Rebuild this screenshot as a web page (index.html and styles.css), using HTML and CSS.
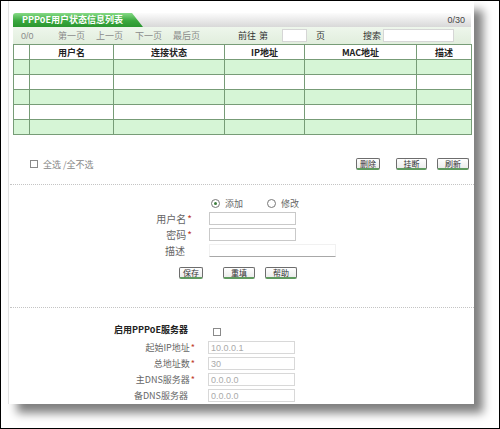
FILE: index.html
```html
<!DOCTYPE html>
<html lang="zh-CN">
<head>
<meta charset="utf-8">
<title>PPPoE用户状态信息列表</title>
<link rel="stylesheet" href="styles.css">
</head>
<body>
<div class="frame">
  <div class="paper">
    <div class="list">
      <div class="titlebar">
        <div class="tab">PPPoE用户状态信息列表</div>
        <div class="count">0/30</div>
      </div>
      <div class="navbar">
        <span class="nv w-pg">0/0</span>
        <span class="nv w-l1">第一页</span>
        <span class="nv w-l2">上一页</span>
        <span class="nv w-l3">下一页</span>
        <span class="nv w-l4">最后页</span>
        <span class="nd w-go">前往</span>
        <span class="nd w-di">第</span>
        <input class="navin w-pgin" type="text">
        <span class="nd w-ye">页</span>
        <span class="nd w-ss">搜索</span>
        <input class="navin w-ssin" type="text">
      </div>
      <table class="grid">
        <colgroup>
          <col class="c1"><col class="c2"><col class="c3"><col class="c4"><col class="c5"><col class="c6">
        </colgroup>
        <tr class="head"><th></th><th>用户名</th><th>连接状态</th><th>IP地址</th><th>MAC地址</th><th>描述</th></tr>
        <tr class="g"><td></td><td></td><td></td><td></td><td></td><td></td></tr>
        <tr class="w"><td></td><td></td><td></td><td></td><td></td><td></td></tr>
        <tr class="g"><td></td><td></td><td></td><td></td><td></td><td></td></tr>
        <tr class="w"><td></td><td></td><td></td><td></td><td></td><td></td></tr>
        <tr class="g"><td></td><td></td><td></td><td></td><td></td><td></td></tr>
      </table>
      <div class="actions">
        <span class="cb"></span>
        <span class="sel">全选 /全不选</span>
        <span class="btn b-first">删除</span>
        <span class="btn b-second">挂断</span>
        <span class="btn b-third">刷新</span>
      </div>
    </div>
    <div class="sep sep1"></div>
    <div class="form form1">
      <div></div>
      <div class="radios">
        <span class="radio on"></span><span class="rtext">添加</span>
        <span class="radio"></span><span class="rtext">修改</span>
      </div>
      <label class="lbl lbl1">用户名<span class="star">*</span></label>
      <input class="inp" type="text">
      <label class="lbl lbl1">密码<span class="star">*</span></label>
      <input class="inp" type="password">
      <label class="lbl lbl1 nostar">描述</label>
      <input class="inp desc" type="text">
    </div>
    <div class="btnrow">
      <span class="btn b-first">保存</span>
      <span class="btn b-second2">重填</span>
      <span class="btn b-third">帮助</span>
    </div>
    <div class="sep sep2"></div>
    <div class="form form2">
      <label class="lbl strong">启用PPPoE服务器</label>
      <div><span class="cb cb2"></span></div>
      <label class="lbl">起始IP地址<span class="star">*</span></label>
      <input class="inp ro" type="text" value="10.0.0.1">
      <label class="lbl">总地址数<span class="star">*</span></label>
      <input class="inp ro" type="text" value="30">
      <label class="lbl">主DNS服务器<span class="star">*</span></label>
      <input class="inp ro" type="text" value="0.0.0.0">
      <label class="lbl nostar">备DNS服务器</label>
      <input class="inp ro" type="text" value="0.0.0.0">
    </div>
  </div>
</div>
</body>
</html>
```

FILE: styles.css
```css
* { box-sizing: border-box; }
html, body { margin: 0; padding: 0; background: #fff; }
body {
  font-family: "Noto Sans CJK SC", "Liberation Sans", sans-serif;
  font-size: 9px;
  color: #555;
}
.frame {
  width: 500px;
  height: 429px;
  border: 1px solid #000;
  overflow: hidden;
  padding-left: 7px;
  background: #fff;
}
.paper {
  width: 466px;
  height: 403px;
  background: #fff;
  border-left: 1px solid #e2e2e2;
  box-shadow: 9px 9px 9px rgba(0, 0, 0, 0.5);
  padding-top: 12px;
}
.list { margin: 0 3px 0 4px; }

.titlebar {
  display: flex;
  height: 14px;
  background: linear-gradient(#fcfcfc, #d8d8d8);
}
.tab {
  width: 130px;
  background: linear-gradient(#86da86, #3aa83e 55%, #2a9630);
  color: #fff;
  font-weight: bold;
  padding-left: 9px;
  line-height: 14px;
  white-space: nowrap;
  border-top-left-radius: 3px;
  clip-path: polygon(0 0, 119px 0, 130px 100%, 0 100%);
}
.count {
  margin-left: auto;
  padding-right: 6px;
  line-height: 14px;
  color: #444;
  font-family: "Liberation Sans", sans-serif;
}

.navbar {
  display: flex;
  align-items: center;
  height: 17px;
  padding-left: 8px;
  background: linear-gradient(#eef6ec, #e1eedd);
  white-space: nowrap;
}
.nv { color: #8a8a8a; }
.nd { color: #333; }
.w-pg { width: 37px; font-family: "Liberation Sans", sans-serif; }
.w-l1 { width: 38px; }
.w-l2 { width: 39px; }
.w-l3 { width: 38px; }
.w-l4 { width: 65px; }
.w-go { width: 20px; }
.w-di { width: 24px; padding-left: 1px; }
.w-ye { width: 47px; }
.w-ss { width: 20px; }
.navin {
  height: 13px;
  border: 1px solid #d6d6d6;
  background: #fff;
  padding: 0;
  margin: 0;
}
.w-pgin { width: 25px; margin-right: 9px; }
.w-ssin { width: 71px; }

.grid {
  width: 458px;
  border-collapse: collapse;
  table-layout: fixed;
}
.c1 { width: 16px; }
.c2 { width: 84px; }
.c3 { width: 111px; }
.c4 { width: 80px; }
.c5 { width: 112px; }
.c6 { width: 55px; }
.grid th, .grid td {
  border: 1px solid #779c77;
  padding: 0;
  height: 15px;
}
.grid tr { height: 15px; }
.grid th {
  background: #fff;
  color: #222;
  font-weight: bold;
  font-size: 9px;
  line-height: 13px;
}
.grid tr.g td { background: #d6f5d6; }
.grid tr.w td { background: #fff; }

.actions {
  display: flex;
  align-items: center;
  height: 12px;
  margin-top: 23px;
  padding-left: 17px;
  padding-right: 2px;
}
.cb {
  display: inline-block;
  width: 8px;
  height: 8px;
  border: 1px solid #8a8a8a;
  background: #fff;
}
.sel { margin-left: 5px; color: #888; }
.btn {
  display: inline-flex;
  align-items: center;
  justify-content: center;
  height: 12px;
  border: 1px solid #6d6d6d;
  border-bottom: 2px solid #5f9a5f;
  border-radius: 2px;
  background: linear-gradient(#ffffff, #ececec);
  color: #333;
  font-size: 8px;
  line-height: 1;
}
.b-first { width: 24px; margin-left: auto; }
.b-second { width: 31px; margin-left: 16px; }
.b-second2 { width: 32px; margin-left: 20px; }
.b-third { width: 32px; margin-left: 10px; }

.sep {
  height: 0;
  border-top: 1px dotted #c4c4c4;
  margin-left: 1px;
}
.sep1 { margin-top: 14px; }
.sep2 { margin-top: 28px; }

.form {
  display: grid;
  grid-template-columns: 186px 87px;
  column-gap: 13px;
  row-gap: 3px;
  align-items: center;
}
.form1 { margin-top: 12px; grid-template-columns: 186px 128px; }
.radios {
  display: flex;
  align-items: center;
  height: 12px;
  padding-left: 3px;
}
.radio {
  display: inline-block;
  width: 9px;
  height: 9px;
  border: 1px solid #777;
  border-radius: 50%;
  background: #fff;
  position: relative;
}
.radio.on::after {
  content: "";
  position: absolute;
  left: 2px;
  top: 2px;
  width: 3px;
  height: 3px;
  border-radius: 50%;
  background: #3d7d3d;
}
.rtext { margin-left: 5px; width: 42px; color: #666; }

.lbl {
  text-align: right;
  color: #666;
  white-space: nowrap;
  line-height: 13px;
}
.lbl1 { padding-right: 3px; font-size: 10px; }
.star { color: #c0392b; margin-left: 1px; }
.nostar { padding-right: 7px; }
.lbl1.nostar { padding-right: 10px; }
.strong { color: #222; font-weight: bold; padding-right: 7px; }

.inp {
  height: 13px;
  width: 87px;
  margin: 0;
  padding: 0 0 0 2px;
  border: 1px solid #c9c9c9;
  background: #fff;
  font-family: "Liberation Sans", sans-serif;
  font-size: 9px;
  color: #aaa;
  outline: none;
}
.form1 .inp { margin-left: 1px; }
.inp.desc {
  width: 127px;
  border: 1px solid #f1f1f1;
  border-bottom: 1px solid #a8a8a8;
}
.cb2 { margin-left: 5px; vertical-align: middle; }
.form2 { margin-top: 15px; }
.form2 .inp { border-color: #d8d8d8; }
.form2 .strong { margin-bottom: 2px; }

.btnrow {
  display: flex;
  align-items: center;
  margin-top: 10px;
  padding-left: 170px;
}
.btnrow .b-first { margin-left: 0; }
```
